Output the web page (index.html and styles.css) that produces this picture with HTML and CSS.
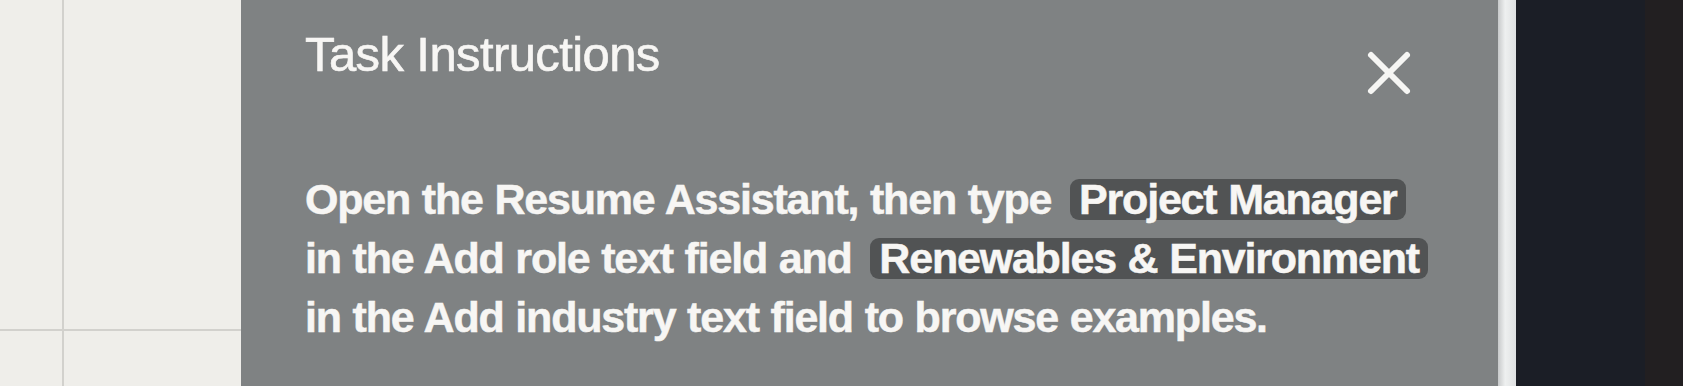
FILE: index.html
```html
<!DOCTYPE html>
<html lang="en">
<head>
<meta charset="utf-8">
<title>Task Instructions</title>
<link rel="stylesheet" href="styles.css">
</head>
<body>
<div class="screen">
  <div class="sheet">
    <div class="cell"></div>
    <div class="cell"></div>
    <div class="cell"></div>
    <div class="cell"></div>
  </div>
  <section class="panel">
    <header class="panel-head">
      <h1 class="title">Task Instructions</h1>
      <button class="close" aria-label="Close">
        <svg width="46" height="46" viewBox="0 0 46 46"><path d="M5 5 L41 41 M41 5 L5 41" stroke="#f6f6f4" stroke-width="6" stroke-linecap="round" fill="none"/></svg>
      </button>
    </header>
    <p class="instructions">Open the Resume Assistant, then type <span class="pill">Project Manager</span><br>in the Add role text field and <span class="pill">Renewables &amp; Environment</span><br>in the Add industry text field to browse examples.</p>
  </section>
  <div class="bezel"></div>
  <div class="dark"></div>
  <div class="dark2"></div>
</div>
</body>
</html>
```
FILE: styles.css
```css
html, body {
  margin: 0;
  padding: 0;
  height: 100%;
  overflow: hidden;
}
body {
  font-family: "Liberation Sans", Arial, sans-serif;
  background: #1c1f27;
}
.screen {
  display: flex;
  height: 386px;
  width: 1683px;
}
.sheet {
  width: 241px;
  flex: none;
  display: grid;
  grid-template-columns: 62px 1fr;
  grid-template-rows: 329px 1fr;
  gap: 2px;
  background: #d2d1cd;
}
.cell {
  background: #efeeea;
}
.panel {
  width: 1257px;
  flex: none;
  background: #7f8283;
  box-sizing: border-box;
  padding: 28px 86px 0 64px;
  color: #f7f6f4;
}
.panel-head {
  display: flex;
  justify-content: space-between;
  align-items: flex-start;
}
.title {
  margin: 0;
  font-weight: 400;
  font-size: 49px;
  letter-spacing: -0.6px;
  line-height: 52px;
  -webkit-text-stroke: 0.6px #f7f6f4;
}
.close {
  background: none;
  border: 0;
  padding: 0;
  margin-top: 22px;
  display: flex;
}
.instructions {
  margin: 74px 0 0;
  font-weight: 700;
  font-size: 43px;
  letter-spacing: -1.2px;
  word-spacing: 1px;
  line-height: 59px;
  white-space: nowrap;
  -webkit-text-stroke: 0.5px #f7f6f4;
}
.pill {
  display: inline-block;
  background: #515354;
  border-radius: 9px;
  padding: 0 9px;
  line-height: 41px;
  margin-left: 7px;
}
.bezel {
  width: 18px;
  flex: none;
  background: linear-gradient(90deg, #c7c9ca, #eef0f0 40%, #dfe1e2);
}
.dark {
  width: 129px;
  flex: none;
  background: #1b1e26;
}
.dark2 {
  flex: 1;
  background: #221f21;
}
```
